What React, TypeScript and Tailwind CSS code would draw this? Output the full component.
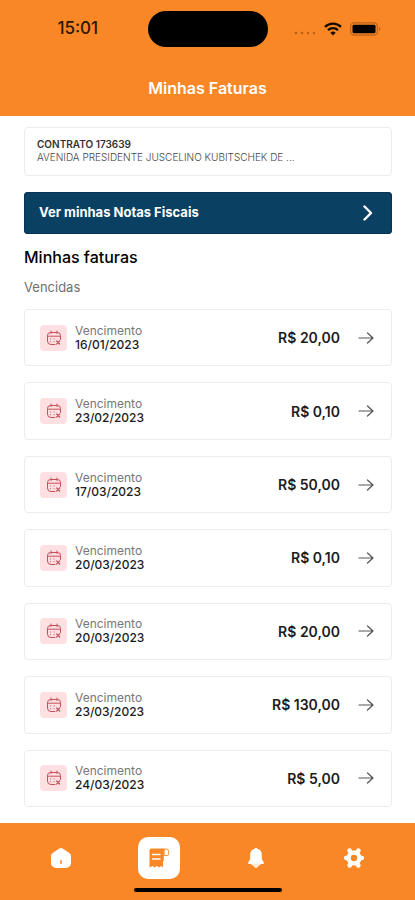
import { useState } from 'react';

const invoices = [
    { id: 1, dueDate: '16/01/2023', amount: 'R$ 20,00' },
    { id: 2, dueDate: '23/02/2023', amount: 'R$ 0,10' },
    { id: 3, dueDate: '17/03/2023', amount: 'R$ 50,00' },
    { id: 4, dueDate: '20/03/2023', amount: 'R$ 0,10' },
    { id: 5, dueDate: '20/03/2023', amount: 'R$ 20,00' },
    { id: 6, dueDate: '23/03/2023', amount: 'R$ 130,00' },
    { id: 7, dueDate: '24/03/2023', amount: 'R$ 5,00' },
];

function HomeIcon() {
    return (
        <svg viewBox="0 0 20 20" className="size-5" fill="currentColor" aria-hidden="true">
            <path
                fillRule="evenodd"
                d="M8.3.6a3 3 0 0 1 3.4 0l6.6 4.300A3.400 3.400 0 0 1 20 7.800V15a5 5 0 0 1-5 5H5a5 5 0 0 1-5-5V7.800a3.400 3.400 0 0 1 1.700-2.900ZM10 12a.8.8 0 0 0-.8.8v2.400a.8.8 0 0 0 1.600 0v-2.400A.8.8 0 0 0 10 12Z"
            />
        </svg>
    );
}

function ReceiptIcon() {
    return (
        <svg viewBox="0 0 20 20" className="size-5" fill="none" aria-hidden="true">
            <path
                d="M2.500.5H17a3 3 0 0 0-2.200 3V13H14v6.500l-1.800-1.500-2.200 1.500-2.200-1.500-2.200 1.500-2-1.500L.5 19.500v-17a2 2 0 0 1 2-2Z"
                fill="#f98726"
            />
            <path d="M15.200 7.500V3.600a2.200 2.600 0 0 1 4.400 0v2.400a1.500 1.500 0 0 1-1.500 1.500Z" fill="#fff" stroke="#f98726" strokeWidth=".9" />
            <path d="M3.500 6.500h7.500M3.500 11h7.500" stroke="#fff" strokeWidth="1.400" strokeLinecap="round" />
        </svg>
    );
}

function BellIcon() {
    return (
        <svg viewBox="0 0 16 20" className="h-5 w-4" fill="currentColor" aria-hidden="true">
            <path d="M8 0a2 2 0 0 1 1.800 1.100A5.800 5.800 0 0 1 13.800 7v4l1.900 3.200a1.300 1.300 0 0 1-1.100 1.900H1.400a1.300 1.300 0 0 1-1.100-1.900L2.200 11V7a5.800 5.800 0 0 1 4-5.900A2 2 0 0 1 8 0Z" />
            <path d="M3 16h10L9.200 19.500a1.800 1.800 0 0 1-2.400 0Z" fillOpacity=".8" />
        </svg>
    );
}

function GearIcon() {
    return (
        <svg viewBox="0 0 20 20" className="size-5" aria-hidden="true">
            <circle cx="10" cy="10" r="7.600" fill="currentColor" />
            <path
                d="M5.700 2.600 14.300 17.400M14.300 2.600 5.700 17.400M2.200 10h15.600"
                stroke="currentColor"
                strokeWidth="4.600"
                strokeLinecap="round"
            />
            <circle cx="10" cy="10" r="3.200" fill="#f98726" />
        </svg>
    );
}

function CalendarIcon() {
    return (
        <svg
            viewBox="0 0 16 16"
            className="size-4"
            fill="none"
            stroke="#c4505a"
            strokeLinecap="round"
            strokeLinejoin="round"
            aria-hidden="true"
        >
            <path d="M9 14.500H5A3.500 3.500 0 0 1 1.500 11V5.500A3 3 0 0 1 4.500 2.500h7a3 3 0 0 1 3 3V9.500M2 6.200h12M5 1v2.500M11 1v2.500" />
            <path d="M4.500 9h.1M8 9h.1M4.500 11.700h.1M8 11.700h.1" />
            <path d="m10.700 11 3 3m0-3-3 3" strokeWidth="1.200" />
        </svg>
    );
}

function StatusBar() {
    return (
        <div className="grid grid-cols-[1fr_120px_1fr] items-center pt-[11px] text-[#2d1805]">
            <span className="pl-2 text-center text-[17px] font-medium">15:01</span>
            <div className="h-9 rounded-full bg-black" />
            <div className="flex items-center justify-center gap-2 pr-2">
                <svg viewBox="0 0 22 12" className="h-3 w-[22px]" fill="#ba6218" aria-hidden="true">
                    <circle cx="2" cy="10" r="1.300" />
                    <circle cx="8" cy="10" r="1.300" />
                    <circle cx="14" cy="10" r="1.300" />
                    <circle cx="20" cy="10" r="1.300" />
                </svg>
                <svg viewBox="0 0 18 14" className="h-[14px] w-[18px]" fill="none" stroke="#160b02" aria-hidden="true">
                    <path d="M1 4.800a11.500 11.500 0 0 1 16 0M4 8.200a7.200 7.200 0 0 1 10 0" strokeWidth="2.300" />
                    <path d="M9 13.600 6.400 10.800a3.700 3.700 0 0 1 5.200 0Z" fill="#160b02" stroke="none" />
                </svg>
                <svg viewBox="0 0 31 14" className="h-[14px] w-[31px]" fill="none" aria-hidden="true">
                    <rect x=".7" y=".9" width="26.600" height="12.200" rx="3.500" stroke="#b9611a" strokeWidth="1.100" />
                    <rect x="2.500" y="2.700" width="23" height="8.600" rx="1.500" fill="#000" />
                    <path d="M29 4.800v4.400c1.800-.8 1.800-3.600 0-4.400Z" fill="#b9611a" />
                </svg>
            </div>
        </div>
    );
}

const tabs = [
    { id: 'home', label: 'Início', Icon: HomeIcon },
    { id: 'invoices', label: 'Faturas', Icon: ReceiptIcon },
    { id: 'alerts', label: 'Notificações', Icon: BellIcon },
    { id: 'settings', label: 'Configurações', Icon: GearIcon },
];

export default function App() {
    const [activeTab, setActiveTab] = useState('invoices');

    return (
        <div className="flex min-h-screen flex-col bg-white font-['Inter',sans-serif] text-[#1c1c1e]">
            <header className="bg-[#f98726] pb-4">
                <StatusBar />
                <h1 className="mt-[29px] text-center text-base font-semibold text-white">Minhas Faturas</h1>
            </header>

            <main className="flex flex-1 flex-col pt-[11px] pr-[23px] pb-4 pl-6">
                <section className="rounded border border-[#ececec] px-3 pt-[10px] pb-[11px] text-[10px] leading-[13px]">
                    <p className="font-semibold text-[#333]">CONTRATO 173639</p>
                    <p className="font-light text-[#444]">AVENIDA PRESIDENTE JUSCELINO KUBITSCHEK DE ...</p>
                </section>

                <button
                    type="button"
                    className="mt-4 flex h-[42px] items-center justify-between rounded-[3px] border border-[#0a3157] bg-[#0a4163] pr-[18px] pl-[14px] text-[13px] font-bold text-white"
                >
                    Ver minhas Notas Fiscais
                    <svg viewBox="0 0 10 16" className="h-4 w-[10px]" fill="none" stroke="currentColor" strokeWidth="2.400" aria-hidden="true">
                        <path d="m1.500 1.500 6.500 6.500-6.500 6.500" strokeLinecap="round" strokeLinejoin="round" />
                    </svg>
                </button>

                <h2 className="mt-[13px] text-base leading-5 font-medium text-black">Minhas faturas</h2>
                <h3 className="mt-[10px] text-[13px] leading-5 text-[#6f6f6f]">Vencidas</h3>

                <ul className="mt-3 flex flex-1 flex-col gap-4">
                    {invoices.map((invoice) => (
                        <li key={invoice.id} className="flex flex-1">
                            <button
                                type="button"
                                className="flex min-h-14 flex-1 items-center rounded border border-[#ececec] px-[15px] text-left"
                            >
                                <span className="flex h-[26px] w-[27px] items-center justify-center rounded bg-[#fee0e2]">
                                    <CalendarIcon />
                                </span>
                                <span className="ml-2 flex flex-col text-[12px] leading-[14px]">
                                    <span className="text-[#777]">Vencimento</span>
                                    <span className="font-medium">{invoice.dueDate}</span>
                                </span>
                                <span className="ml-auto text-[14px] font-semibold">{invoice.amount}</span>
                                <svg
                                    viewBox="0 0 16 14"
                                    className="mr-[2px] ml-[18px] h-[14px] w-4"
                                    fill="none"
                                    stroke="#555"
                                    strokeWidth="1.200"
                                    strokeLinecap="round"
                                    strokeLinejoin="round"
                                    aria-hidden="true"
                                >
                                    <path d="M1 7h14M9.500 2 15 7l-5.500 5" />
                                </svg>
                            </button>
                        </li>
                    ))}
                </ul>
            </main>

            <footer className="bg-[#f98726] pt-[14px] pb-2">
                <nav className="grid grid-cols-4 justify-items-center px-3 text-white">
                    {tabs.map(({ id, label, Icon }) => (
                        <button
                            key={id}
                            type="button"
                            aria-label={label}
                            onClick={() => setActiveTab(id)}
                            className={`flex size-[42px] items-center justify-center rounded-[10px] ${
                                activeTab === id ? 'bg-white text-[#f98726]' : ''
                            }`}
                        >
                            <Icon />
                        </button>
                    ))}
                </nav>
                <div className="mx-auto mt-[9px] h-1 w-[148px] rounded-full bg-black" />
            </footer>
        </div>
    );
}
